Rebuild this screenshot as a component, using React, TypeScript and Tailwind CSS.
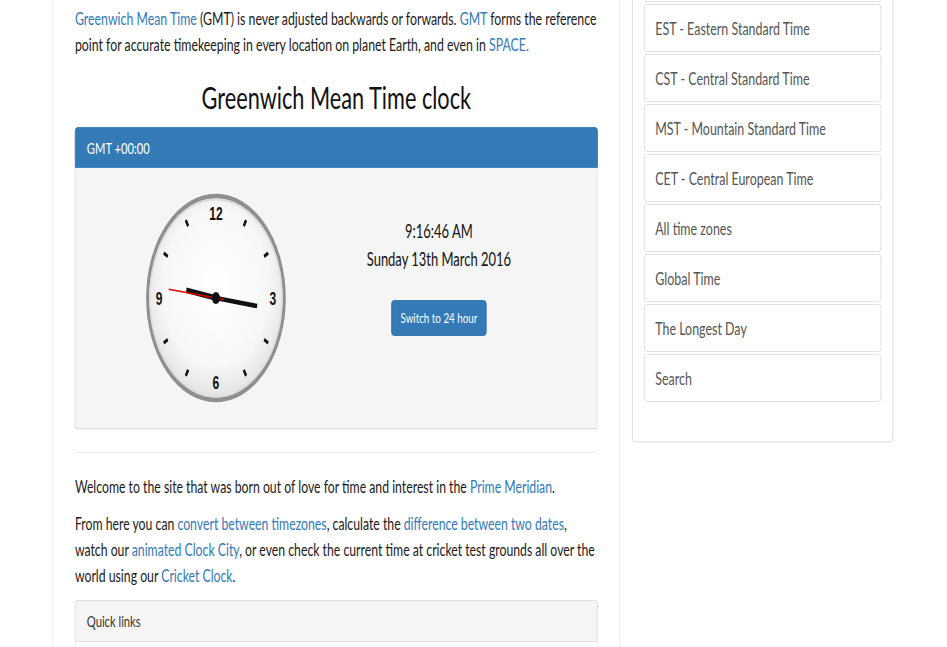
import React from 'react'

const sideLinks = [
  'GMT - Greenwich Mean Time',
  'EST - Eastern Standard Time',
  'CST - Central Standard Time',
  'MST - Mountain Standard Time',
  'CET - Central European Time',
  'All time zones',
  'Global Time',
  'The Longest Day',
  'Search',
]

const ticks = [1, 2, 4, 5, 7, 8, 10, 11]

function A({ children }: { children: React.ReactNode }) {
  return <a className="text-[#337ab7]">{children}</a>
}

function Clock() {
  // drawn in a 210 box, squeezed a little to match the face
  return (
    <svg width="201" height="210" viewBox="0 0 210 210" preserveAspectRatio="none">
      <defs>
        <radialGradient id="face" cx="50%" cy="45%" r="55%">
          <stop offset="0%" stopColor="#ffffff" />
          <stop offset="70%" stopColor="#f7f7f7" />
          <stop offset="100%" stopColor="#e2e2e2" />
        </radialGradient>
      </defs>
      <circle cx="105" cy="105" r="102" fill="url(#face)" stroke="#8f8f8f" strokeWidth="4.5" />
      <circle cx="105" cy="105" r="98.5" fill="none" stroke="#dcdcdc" strokeWidth="2" />
      {ticks.map((h) => {
        const a = (h * 30 * Math.PI) / 180
        return (
          <line
            key={h}
            x1={105 + 83 * Math.sin(a)}
            y1={105 - 83 * Math.cos(a)}
            x2={105 + 90 * Math.sin(a)}
            y2={105 - 90 * Math.cos(a)}
            stroke="#111"
            strokeWidth="3.5"
          />
        )
      })}
      <g fontFamily="'Liberation Sans', Arial, sans-serif" fontWeight="700" fontSize="18" fill="#111" textAnchor="middle" dominantBaseline="central">
        <text x="105" y="21">12</text>
        <text x="190" y="106">3</text>
        <text x="105" y="190">6</text>
        <text x="20" y="106">9</text>
      </g>
      <line x1="105" y1="105" x2="60.7" y2="97.2" stroke="#111" strokeWidth="5.5" />
      <line x1="105" y1="105" x2="166.5" y2="113.1" stroke="#111" strokeWidth="4.5" />
      <line x1="116.9" y1="106.5" x2="34.5" y2="96.3" stroke="#e00000" strokeWidth="1.6" />
      <circle cx="105" cy="105" r="6" fill="#111" />
    </svg>
  )
}

export default function App() {
  return (
    <div className="h-[647px] w-full overflow-hidden bg-white font-[Lato,'Noto_Sans',sans-serif]">
      <div className="flex min-h-[647px] w-[1353px] origin-top-left scale-x-70 items-start pl-[75px]">
        <main className="w-[811px] shrink-0 self-stretch border-x border-[#e6e6e6] px-[31px] pt-[6px]">
          <p className="-mr-[4px] text-[17.6px] leading-[26px] text-[#1a1a1a]">
            <A>Greenwich Mean Time</A> (GMT) is never adjusted backwards or forwards. <A>GMT</A> forms the
            reference point for accurate timekeeping in every location on planet Earth, and even in{' '}
            <A>SPACE.</A>
          </p>

          <h1 className="mt-[23px] text-center text-[31px] leading-[33px] text-[#111]">Greenwich Mean Time clock</h1>

          <section className="mt-[13px]">
            <div className="flex h-[41px] items-center rounded-t-[4px] border border-[#337ab7] bg-[#337ab7] px-[16px] text-[16px] text-white">
              GMT +00:00
            </div>
            <div className="grid grid-cols-[400px_238px] rounded-b-[4px] border-x border-b border-[#dddddd] bg-[#f5f5f5] py-[25px] shadow-[0_1px_2px_rgba(0,0,0,0.06)]">
              <div className="flex justify-center">
                <Clock />
              </div>
              <div className="flex flex-col items-center pt-[24px] text-center text-[18.5px] leading-[28px] text-[#111]">
                <div>9:16:46 AM</div>
                <div>Sunday 13th March 2016</div>
                <button className="mt-[27px] rounded-[4px] border border-[#2e6da4] bg-[#337ab7] px-[12px] py-[7px] text-[14px] leading-[20px] text-white">
                  Switch to 24 hour
                </button>
              </div>
            </div>
          </section>

          <hr className="mt-[23px] border-t border-[#eeeeee]" />

          <p className="mt-[21px] -mr-[4px] text-[17.5px] leading-[26px] text-[#1a1a1a]">
            Welcome to the site that was born out of love for time and interest in the <A>Prime Meridian</A>.
          </p>
          <p className="mt-[11px] -mr-[4px] text-[17.5px] leading-[26px] text-[#1a1a1a]">
            From here you can <A>convert between timezones</A>, calculate the <A>difference between two dates</A>,
            watch our <A>animated Clock City</A>, or even check the current time at cricket test grounds all over the
            world using our <A>Cricket Clock</A>.
          </p>

          <section className="mt-[11px]">
            <div className="flex h-[42px] items-center rounded-t-[4px] border border-[#dddddd] bg-[#f5f5f5] px-[16px] text-[16px] text-[#333]">
              Quick links
            </div>
            <div className="h-[120px] rounded-b-[4px] border-x border-b border-[#dddddd]" />
          </section>
        </main>

        <aside className="-mt-[62px] ml-[17px] w-[373px] shrink-0 rounded-[4px] border border-[#dddddd] px-[16px] pt-[15px] pb-[39px] shadow-[0_1px_1px_rgba(0,0,0,0.05)]">
          <div className="flex flex-col gap-[2px]">
            {sideLinks.map((l) => (
              <a
                key={l}
                className="rounded-[4px] border border-[#dddddd] bg-white px-[15px] py-[12px] text-[17.8px] leading-[22px] text-[#555]"
              >
                {l}
              </a>
            ))}
          </div>
        </aside>
      </div>
    </div>
  )
}
